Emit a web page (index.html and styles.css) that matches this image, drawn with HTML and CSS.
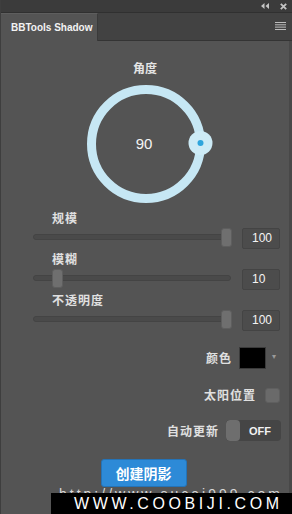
FILE: index.html
```html
<!DOCTYPE html>
<html lang="zh">
<head>
<meta charset="utf-8">
<link rel="stylesheet" href="styles.css">
</head>
<body>
<div class="app">
  <div class="titlebar">
    <svg class="tb-icon" width="8" height="6" viewBox="0 0 8 6"><path d="M3.5 0 L0 3 L3.5 6 Z M8 0 L4.5 3 L8 6 Z" fill="#c4c4c4"/></svg>
    <svg class="tb-icon" width="7" height="7" viewBox="0 0 7 7"><path d="M0.8 0.8 L6.2 6.2 M6.2 0.8 L0.8 6.2" stroke="#c4c4c4" stroke-width="1.8"/></svg>
  </div>
  <div class="tabrow">
    <div class="tab">BBTools Shadow</div>
    <div class="tabfill">
      <svg class="menu" width="11" height="8" viewBox="0 0 11 8"><rect y="0" width="11" height="1" fill="#bdbdbd"/><rect y="2.3" width="11" height="1" fill="#bdbdbd"/><rect y="4.6" width="11" height="1" fill="#bdbdbd"/><rect y="7" width="11" height="1" fill="#bdbdbd"/></svg>
    </div>
  </div>
  <div class="panel">
    <div class="angle-label">角度</div>
    <div class="dial">
      <svg width="124" height="124" viewBox="0 0 124 124">
        <circle cx="62" cy="62" r="54.5" fill="none" stroke="#c6e7f4" stroke-width="9"/>
        <circle cx="116.5" cy="61" r="12" fill="#cdebf6"/>
        <circle cx="116.5" cy="61" r="3" fill="#2fa5dc"/>
        <text x="60" y="67" text-anchor="middle" class="dial-text">90</text>
      </svg>
    </div>
    <div class="group group-first">
      <div class="label">规模</div>
      <div class="ctrl">
        <div class="track"><div class="thumb" style="left:187px"></div></div>
        <div class="numbox">100</div>
      </div>
    </div>
    <div class="group">
      <div class="label">模糊</div>
      <div class="ctrl">
        <div class="track"><div class="thumb" style="left:18px"></div></div>
        <div class="numbox">10</div>
      </div>
    </div>
    <div class="group">
      <div class="label">不透明度</div>
      <div class="ctrl">
        <div class="track"><div class="thumb" style="left:187px"></div></div>
        <div class="numbox">100</div>
      </div>
    </div>
    <div class="row row-color">
      <span class="rlabel">颜色</span>
      <span class="swatch"></span>
      <span class="caret">&#x25BE;</span>
    </div>
    <div class="row row-sun">
      <span class="rlabel">太阳位置</span>
      <span class="check"></span>
    </div>
    <div class="row row-auto">
      <span class="rlabel">自动更新</span>
      <span class="toggle"><span class="knob"></span><span class="off">OFF</span></span>
    </div>
    <div class="btnrow">
      <button class="create">创建阴影</button>
    </div>
  </div>
  <div class="ghost"><span>http://www.sucai999.com</span></div>
  <div class="watermark">WWW.COOBIJI.COM</div>
</div>
</body>
</html>
```
FILE: styles.css
```css
html, body {
  margin: 0;
  padding: 0;
  background: #535353;
}
body {
  width: 292px;
  height: 514px;
  overflow: hidden;
  font-family: "Noto Sans CJK SC", "Liberation Sans", sans-serif;
}
.app {
  position: relative;
  width: 292px;
  height: 514px;
  background: #545454;
  border-left: 1px solid #3e3e3e;
  box-sizing: border-box;
  overflow: hidden;
}
.titlebar {
  height: 13px;
  background: #3b3b3b;
  border-bottom: 1px solid #303030;
  box-sizing: border-box;
  display: flex;
  justify-content: flex-end;
  align-items: center;
  gap: 11px;
  padding-right: 5px;
}
.tb-icon {
  display: block;
}
.tabrow {
  height: 28px;
  display: flex;
}
.tab {
  width: 97px;
  background: #545454;
  border-top: 1px solid #5e5e5e;
  border-right: 1px solid #3a3a3a;
  box-sizing: border-box;
  color: #f2f2f2;
  font-family: "Liberation Sans", sans-serif;
  font-weight: bold;
  font-size: 10px;
  line-height: 27px;
  padding-left: 10px;
  white-space: nowrap;
  overflow: hidden;
}
.tabfill {
  flex: 1;
  background: #424242;
  border-bottom: 1px solid #343434;
  display: flex;
  justify-content: flex-end;
  align-items: center;
  padding-right: 6px;
}
.menu {
  display: block;
  margin-top: -2px;
}
.panel {
  display: flex;
  flex-direction: column;
  border-right: 3px solid #484848;
  height: 473px;
  box-sizing: border-box;
}
.angle-label {
  margin-top: 19px;
  text-align: center;
  color: #e4e4e4;
  font-size: 12px;
  line-height: 16px;
  font-weight: bold;
}
.dial {
  margin-top: 6px;
  display: flex;
  justify-content: center;
  padding-left: 2px;
}
.dial svg {
  display: block;
  overflow: visible;
}
.dial-text {
  fill: #f4f4f4;
  font-family: "Liberation Sans", sans-serif;
  font-size: 15px;
}
.group {
  display: flex;
  flex-direction: column;
}
.group-first {
  margin-top: 4px;
}
.group + .group {
  margin-top: 2px;
}
.label {
  padding-left: 51px;
  color: #e0e0e0;
  font-size: 12px;
  line-height: 16px;
  font-weight: bold;
  letter-spacing: 1px;
}
.ctrl {
  margin-top: 2px;
  height: 21px;
  display: flex;
  align-items: center;
  padding-left: 32px;
  gap: 11px;
}
.track {
  position: relative;
  width: 198px;
  height: 6px;
  margin-top: -4px;
  background: #4a4a4a;
  border: 1px solid #444;
  border-radius: 4px;
  box-sizing: border-box;
}
.thumb {
  position: absolute;
  top: -7px;
  width: 11px;
  height: 19px;
  background: #6f6f6f;
  border: 1px solid #5e5e5e;
  border-radius: 3px;
  box-sizing: border-box;
}
.numbox {
  width: 38px;
  height: 21px;
  background: #4c4c4c;
  border: 1px solid #444;
  border-radius: 2px;
  box-sizing: border-box;
  color: #f4f4f4;
  font-family: "Liberation Sans", sans-serif;
  font-size: 12px;
  line-height: 19px;
  padding-left: 9px;
}
.row {
  display: flex;
  justify-content: flex-end;
  align-items: center;
}
.rlabel {
  color: #e0e0e0;
  font-size: 12px;
  line-height: 16px;
  font-weight: bold;
  letter-spacing: 1px;
}
.row-color {
  margin-top: 16px;
  height: 22px;
  padding-right: 13px;
}
.swatch {
  width: 27px;
  height: 22px;
  background: #000;
  border: 1px solid #3a3a3a;
  box-sizing: border-box;
  margin-left: 7px;
}
.caret {
  color: #9a9a9a;
  font-family: "DejaVu Sans", sans-serif;
  font-size: 8px;
  margin-left: 6px;
  margin-top: -3px;
}
.row-sun {
  margin-top: 18px;
  height: 16px;
  padding-right: 9px;
}
.check {
  width: 15px;
  height: 15px;
  background: #6a6a6a;
  border: 1px solid #5f5f5f;
  border-radius: 3px;
  box-sizing: border-box;
  margin-left: 9px;
}
.row-auto {
  margin-top: 17px;
  height: 21px;
  padding-right: 8px;
}
.toggle {
  margin-left: 7px;
  width: 55px;
  height: 21px;
  background: #454545;
  border-radius: 4px;
  display: flex;
  align-items: center;
  overflow: hidden;
}
.knob {
  width: 14px;
  height: 21px;
  background: #6e6e6e;
  border-radius: 4px;
}
.off {
  margin-left: 9px;
  color: #f2f2f2;
  font-family: "Liberation Sans", sans-serif;
  font-size: 11px;
  font-weight: bold;
}
.btnrow {
  margin-top: 18px;
  display: flex;
  justify-content: center;
  padding-right: 3px;
}
.create {
  width: 86px;
  height: 28px;
  background: #2d8ad7;
  border: 1px solid #2473b7;
  border-radius: 3px;
  color: #ffffff;
  font-family: "Noto Sans CJK SC", sans-serif;
  font-weight: bold;
  font-size: 14px;
  line-height: 24px;
  padding: 0;
}
.ghost {
  position: absolute;
  left: 58px;
  top: 486px;
  height: 7px;
  overflow: hidden;
  color: #d8d8d8;
  font-family: "Liberation Sans", sans-serif;
  font-size: 14px;
  line-height: 16px;
  letter-spacing: 3px;
  white-space: nowrap;
}
.ghost span {
  display: block;
}
.watermark {
  position: absolute;
  left: 50px;
  top: 493px;
  width: 242px;
  height: 21px;
  background: #000;
  color: #fff;
  font-family: "Liberation Sans", sans-serif;
  font-size: 16px;
  line-height: 22px;
  letter-spacing: 3.6px;
  padding-left: 23px;
  box-sizing: border-box;
  white-space: nowrap;
}
```
